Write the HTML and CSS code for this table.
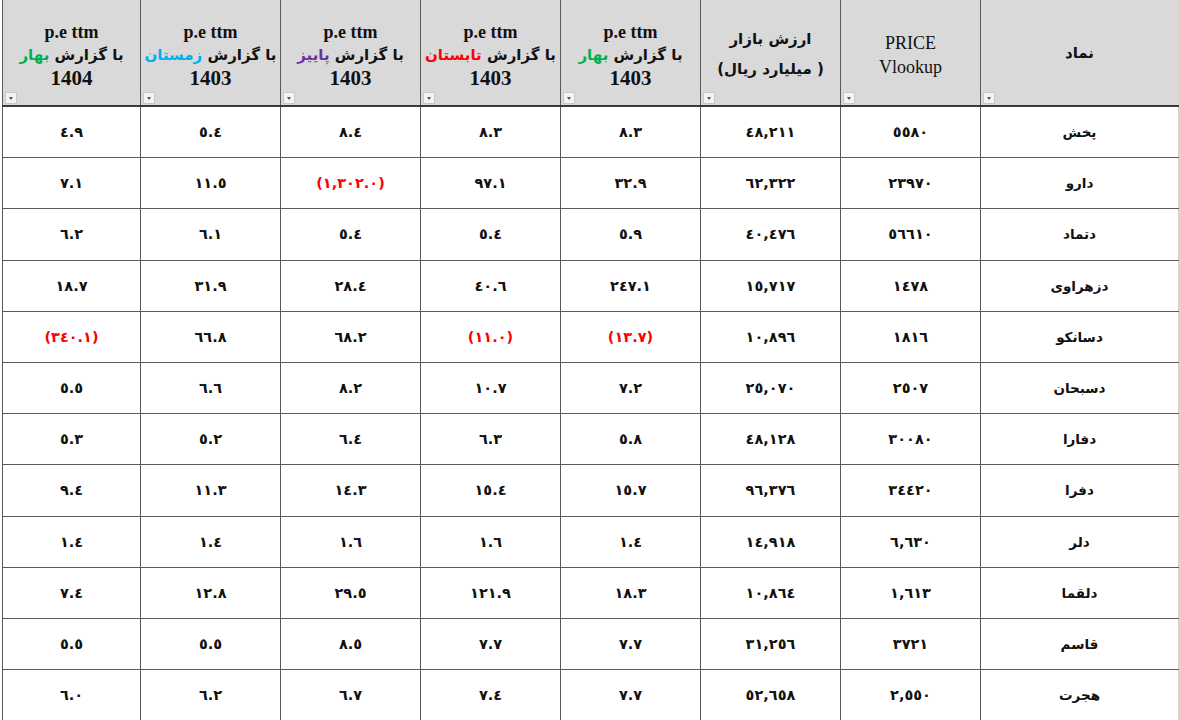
FILE: index.html
```html
<!DOCTYPE html>
<html lang="fa" dir="rtl">
<head>
<meta charset="utf-8">
<link rel="stylesheet" href="styles.css">
</head>
<body>
<table class="sheet">
  <colgroup>
    <col class="c-name"><col class="c-n"><col class="c-n"><col class="c-n"><col class="c-n"><col class="c-n"><col class="c-n"><col class="c-last">
  </colgroup>
  <thead>
    <tr>
      <th><span class="fa-h">نماد</span><i class="flt"></i></th>
      <th><div class="lat">PRICE<br>Vlookup</div><i class="flt"></i></th>
      <th><div class="fa-h2">ارزش بازار<br>( میلیارد ریال)</div><i class="flt"></i></th>
      <th><div class="pe">p.e ttm</div><div class="fa-s">با گزارش <span class="green">بهار</span></div><div class="yr">1403</div><i class="flt"></i></th>
      <th><div class="pe">p.e ttm</div><div class="fa-s">با گزارش <span class="red">تابستان</span></div><div class="yr">1403</div><i class="flt"></i></th>
      <th><div class="pe">p.e ttm</div><div class="fa-s">با گزارش <span class="purple">پاییز</span></div><div class="yr">1403</div><i class="flt"></i></th>
      <th><div class="pe">p.e ttm</div><div class="fa-s">با گزارش <span class="blue">زمستان</span></div><div class="yr">1403</div><i class="flt"></i></th>
      <th><div class="pe">p.e ttm</div><div class="fa-s">با گزارش <span class="green">بهار</span></div><div class="yr">1404</div><i class="flt"></i></th>
    </tr>
  </thead>
  <tbody>
    <tr><td class="nm">پخش</td><td>٥٥٨٠</td><td>٤٨,٢١١</td><td>٨.٣</td><td>٨.٣</td><td>٨.٤</td><td>٥.٤</td><td>٤.٩</td></tr>
    <tr><td class="nm">دارو</td><td>٢٣٩٧٠</td><td>٦٢,٣٢٢</td><td>٣٢.٩</td><td>٩٧.١</td><td class="neg">(١,٣٠٢.٠)</td><td>١١.٥</td><td>٧.١</td></tr>
    <tr><td class="nm">دتماد</td><td>٥٦٦١٠</td><td>٤٠,٤٧٦</td><td>٥.٩</td><td>٥.٤</td><td>٥.٤</td><td>٦.١</td><td>٦.٢</td></tr>
    <tr><td class="nm">دزهراوی</td><td>١٤٧٨</td><td>١٥,٧١٧</td><td>٢٤٧.١</td><td>٤٠.٦</td><td>٢٨.٤</td><td>٣١.٩</td><td>١٨.٧</td></tr>
    <tr><td class="nm">دسانکو</td><td>١٨١٦</td><td>١٠,٨٩٦</td><td class="neg">(١٣.٧)</td><td class="neg">(١١.٠)</td><td>٦٨.٢</td><td>٦٦.٨</td><td class="neg">(٣٤٠.١)</td></tr>
    <tr><td class="nm">دسبحان</td><td>٢٥٠٧</td><td>٢٥,٠٧٠</td><td>٧.٢</td><td>١٠.٧</td><td>٨.٢</td><td>٦.٦</td><td>٥.٥</td></tr>
    <tr><td class="nm">دفارا</td><td>٣٠٠٨٠</td><td>٤٨,١٢٨</td><td>٥.٨</td><td>٦.٣</td><td>٦.٤</td><td>٥.٢</td><td>٥.٣</td></tr>
    <tr><td class="nm">دفرا</td><td>٣٤٤٢٠</td><td>٩٦,٣٧٦</td><td>١٥.٧</td><td>١٥.٤</td><td>١٤.٣</td><td>١١.٣</td><td>٩.٤</td></tr>
    <tr><td class="nm">دلر</td><td>٦,٦٣٠</td><td>١٤,٩١٨</td><td>١.٤</td><td>١.٦</td><td>١.٦</td><td>١.٤</td><td>١.٤</td></tr>
    <tr><td class="nm">دلقما</td><td>١,٦١٣</td><td>١٠,٨٦٤</td><td>١٨.٣</td><td>١٢١.٩</td><td>٢٩.٥</td><td>١٢.٨</td><td>٧.٤</td></tr>
    <tr><td class="nm">قاسم</td><td>٣٧٢١</td><td>٣١,٢٥٦</td><td>٧.٧</td><td>٧.٧</td><td>٨.٥</td><td>٥.٥</td><td>٥.٥</td></tr>
    <tr><td class="nm">هجرت</td><td>٢,٥٥٠</td><td>٥٢,٦٥٨</td><td>٧.٧</td><td>٧.٤</td><td>٦.٧</td><td>٦.٢</td><td>٦.٠</td></tr>
  </tbody>
</table>
</body>
</html>
```
FILE: styles.css
```css
html, body {
  margin: 0;
  padding: 0;
  background: #ffffff;
}
body {
  font-family: "DejaVu Sans", sans-serif;
  color: #111;
}
.sheet {
  border-collapse: collapse;
  table-layout: fixed;
  width: 1176px;
}
.c-name { width: 198px; }
.c-n { width: 140px; }
.c-last { width: 138px; }

.sheet th, .sheet td {
  border: 1px solid #5a5a5a;
  text-align: center;
  vertical-align: middle;
  padding: 0;
}
.sheet th {
  position: relative;
  background: #d9d9d9;
  height: 105px;
  font-weight: bold;
  border-top: none;
  border-bottom: 2px solid #3a3a3a;
  white-space: nowrap;
}
.sheet tr > :first-child { border-right: 1px solid #d4d4d4; }
.sheet td {
  height: 50.2px;
  font-size: 14.5px;
  font-weight: bold;
  direction: ltr;
  unicode-bidi: isolate;
}
.sheet td.nm {
  direction: rtl;
  font-size: 13.5px;
}
.sheet tbody tr:last-child td { border-bottom: 1px solid #3a3a3a; }
.neg { color: #ff0000; }

.pe {
  font-family: "Liberation Serif", serif;
  font-size: 18px;
  font-weight: bold;
  line-height: 23px;
  direction: ltr;
  padding-top: 6px;
}
.fa-s {
  font-size: 15px;
  line-height: 23px;
}
.yr {
  font-family: "Liberation Serif", serif;
  font-size: 21px;
  font-weight: bold;
  line-height: 23px;
}
.lat {
  font-family: "Liberation Serif", serif;
  font-weight: normal;
  font-size: 18px;
  line-height: 24px;
  direction: ltr;
  padding-top: 4px;
}
.fa-h { font-size: 15px; }
.fa-h2 {
  font-size: 15px;
  line-height: 30px;
  padding-top: 2px;
}
.green { color: #00b050; }
.red { color: #ff0000; }
.purple { color: #7030a0; }
.blue { color: #00b0f0; }

.flt {
  position: absolute;
  left: 2px;
  bottom: 1px;
  width: 12px;
  height: 12px;
  background: #f3f3f3;
  border: 1px solid #c8c8c8;
  box-sizing: border-box;
}
.flt::after {
  content: "";
  position: absolute;
  left: 3px;
  top: 4px;
  border-left: 2.5px solid transparent;
  border-right: 2.5px solid transparent;
  border-top: 3px solid #555;
}
```
